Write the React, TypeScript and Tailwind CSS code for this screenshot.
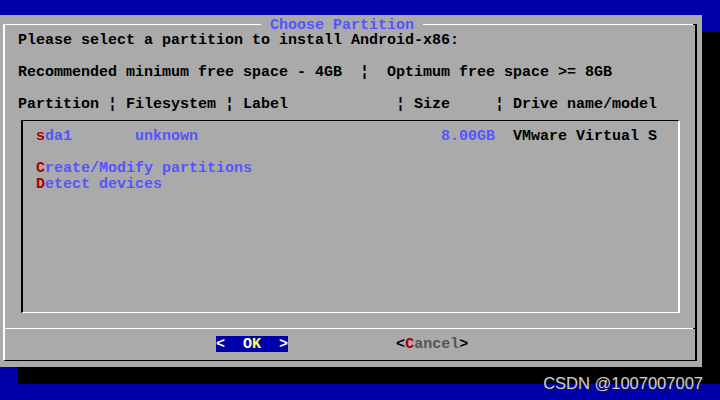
import React from "react";

const Row = ({ children }: { children?: React.ReactNode }) => (
  <div className="h-[16px] leading-[18px] whitespace-pre pl-[13px]">{children}</div>
);

const R = ({ children }: { children: React.ReactNode }) => (
  <span className="text-[#aa0000]">{children}</span>
);
const B = ({ children }: { children: React.ReactNode }) => (
  <span className="text-[#5555ff]">{children}</span>
);

export default function App() {
  return (
    <div className="relative w-[720px] h-[400px] overflow-hidden bg-[#0000aa] font-['Liberation_Mono',monospace] font-bold text-[15px] text-black">
      <div className="pt-[15px]">
        <div className="flex flex-col w-[702px] h-[352px] bg-[#aaaaaa] shadow-[18px_17px_0_0_#000] pt-[9px] pl-[3px] pr-[5px] pb-[6px]">
          <div className="flex flex-1 flex-col border-l-2 border-l-white border-r-2 border-r-black border-b border-b-black">
            {/* top border with title */}
            <div className="flex h-px items-center">
              <div className="h-px w-[256px] shrink-0 bg-white" />
              <span className="h-[16px] w-[162px] shrink-0 whitespace-pre leading-[18px] text-[#5555ff]">
                {" Choose Partition "}
              </span>
              <div className="h-px flex-1 bg-white" />
              <div className="h-px w-[2px] bg-black" />
            </div>

            <div className="flex flex-col pt-[7px]">
              <Row>Please select a partition to install Android-x86:</Row>
              <Row />
              <Row>{"Recommended minimum free space - 4GB  ¦  Optimum free space >= 8GB"}</Row>
              <Row />
              <Row>{"Partition ¦ Filesystem ¦ Label            ¦ Size     ¦ Drive name/model"}</Row>

              {/* list box */}
              <div className="mt-[8px] ml-[16px] h-[193px] w-[659px] border-t border-t-black border-l-2 border-l-black border-r-2 border-r-white border-b border-b-white pt-[7px]">
                <Row>
                  <R>s</R>
                  <B>{"da1       unknown                           8.00GB"}</B>
                  {"  VMware Virtual S"}
                </Row>
                <Row />
                <Row>
                  <R>C</R>
                  <B>reate/Modify partitions</B>
                </Row>
                <Row>
                  <R>D</R>
                  <B>etect devices</B>
                </Row>
              </div>

              {/* separator */}
              <div className="mt-[15px] flex h-px">
                <div className="h-px flex-1 bg-white" />
                <div className="h-px w-[2px] bg-black" />
              </div>

              {/* buttons */}
              <div className="mt-[7px] flex h-[16px] whitespace-pre pl-[13px] leading-[18px]">
                <span>{"                      "}</span>
                <span className="h-[16px] bg-[#0000aa] text-white">
                  {"<  O"}
                  <span className="text-[#ffff55]">K</span>
                  {"  >"}
                </span>
                <span>{"            <"}</span>
                <R>C</R>
                <span className="text-[#555555]">ancel</span>
                <span>{">"}</span>
              </div>
            </div>
          </div>
        </div>
      </div>

      <div className="absolute right-[17px] top-[374px] font-['Liberation_Sans',Arial,sans-serif] font-normal text-[16.5px] leading-[18px] text-[#cfcfcf] [text-shadow:1px_1px_1px_#222]">
        CSDN @1007007007
      </div>
    </div>
  );
}
